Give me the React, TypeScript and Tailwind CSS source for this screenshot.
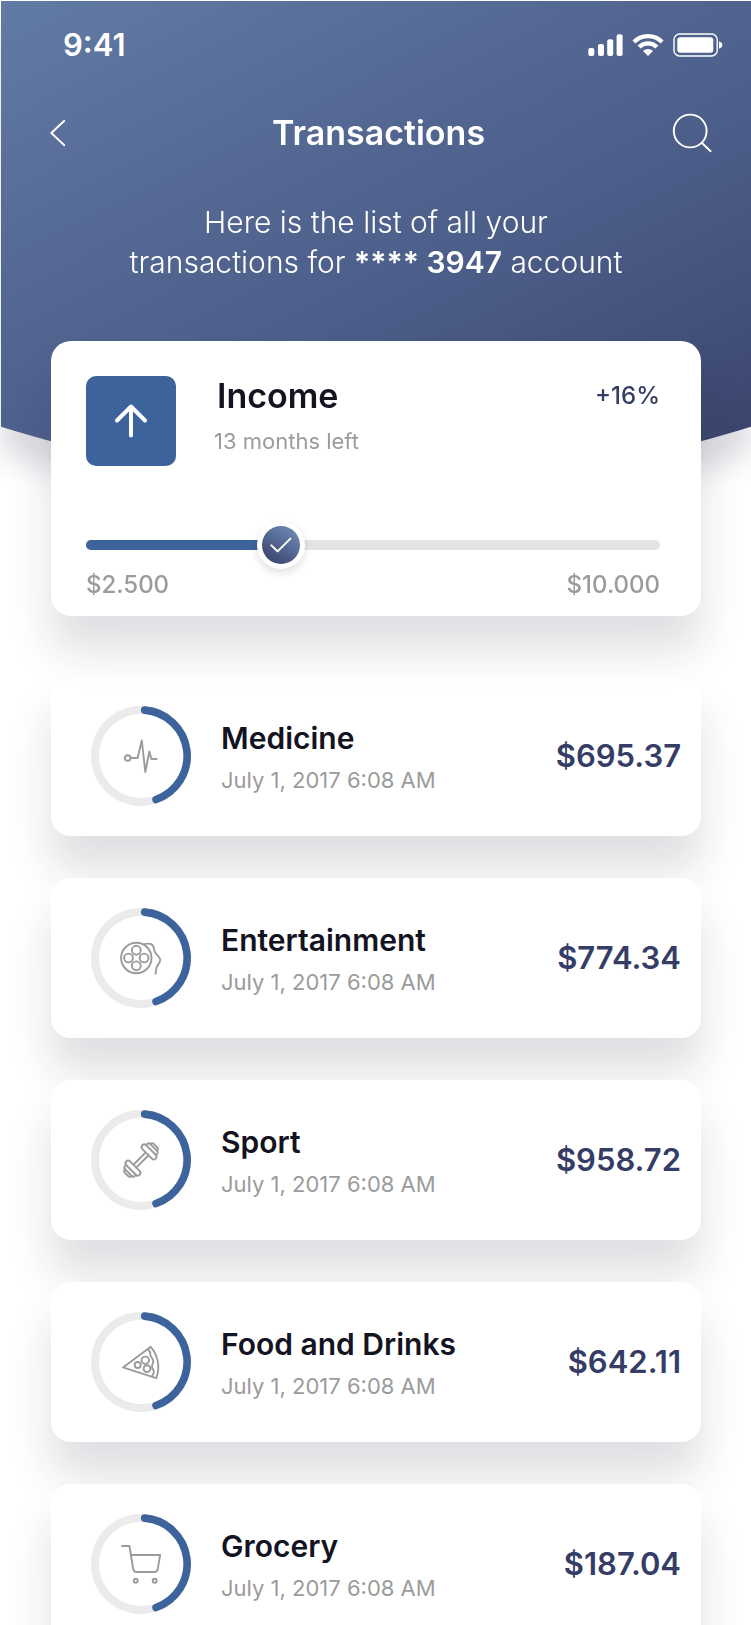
import { useState } from "react";
import type { ReactNode } from "react";

type Transaction = {
  title: string;
  date: string;
  amount: string;
  icon: ReactNode;
};

const transactions: Transaction[] = [
  {
    title: "Medicine",
    date: "July 1, 2017 6:08 AM",
    amount: "$695.37",
    icon: (
      <>
        <circle cx="36.7" cy="52" r="2.8" />
        <path d="M39.7 52H46.6L50.8 34.5L54.3 66L58.3 45.5L60.4 53H65.6" />
      </>
    ),
  },
  {
    title: "Entertainment",
    date: "July 1, 2017 6:08 AM",
    amount: "$774.34",
    icon: (
      <>
        <circle cx="45.3" cy="50" r="15.2" />
        <circle cx="45.3" cy="42.2" r="4.4" />
        <circle cx="37.5" cy="50" r="4.4" />
        <circle cx="53.1" cy="50" r="4.4" />
        <circle cx="45.3" cy="57.8" r="4.4" />
        <path d="M52 36.4C55 35.6 58 35.4 60.2 36.2C63 37.4 62.8 40.5 63.6 43.2C64.4 46.4 69 48.2 69.2 51.6C69.4 54.6 66.8 56.2 65.8 59C65 61.2 64.6 63.4 64.6 65.7" />
      </>
    ),
  },
  {
    title: "Sport",
    date: "July 1, 2017 6:08 AM",
    amount: "$958.72",
    icon: (
      <g transform="rotate(-45 50 50)">
        <path d="M41.3 48H58.7M41.3 52H58.7" />
        <rect x="58.7" y="40.6" width="5.4" height="18.8" rx="2.7" />
        <rect x="35.9" y="40.6" width="5.4" height="18.8" rx="2.7" />
        <path d="M64.1 43.2C67 42.6 67.8 43.6 67.8 45.2V54.8C67.8 56.4 67 57.4 64.1 56.8" />
        <path d="M35.9 43.2C33 42.6 32.2 43.6 32.2 45.2V54.8C32.2 56.4 33 57.4 35.9 56.8" />
        <path d="M67.8 45C69.8 45.4 70.4 46.2 70.4 47.4V52.6C70.4 53.8 69.8 54.6 67.8 55" />
        <path d="M32.2 45C30.2 45.4 29.6 46.2 29.6 47.4V52.6C29.6 53.8 30.2 54.6 32.2 55" />
      </g>
    ),
  },
  {
    title: "Food and Drinks",
    date: "July 1, 2017 6:08 AM",
    amount: "$642.11",
    icon: (
      <>
        <path d="M32 55.4L59.7 34.8C67 43 69.4 55.4 65.3 66.2Z" />
        <path d="M57 37.2C58.6 38.6 59.8 40 59.3 42.4C58.9 45 62.2 46 62.3 49C62.4 51.4 60.8 52.4 61 54.8C61.2 57 63 57.6 62.9 60C62.8 62 61.2 62.6 61.2 64.8" />
        <circle cx="54.3" cy="48.3" r="3.7" />
        <circle cx="46.7" cy="53" r="3" />
        <circle cx="56" cy="56.7" r="3.4" />
      </>
    ),
  },
  {
    title: "Grocery",
    date: "July 1, 2017 6:08 AM",
    amount: "$187.04",
    icon: (
      <>
        <path d="M31 32H38.4L42.2 54.8C42.6 57 43.4 58 45.4 58H63.4C65.4 58 66.4 57 66.8 54.8L69.1 41H40" />
        <circle cx="44.7" cy="66.7" r="2" />
        <circle cx="63.7" cy="66.7" r="2" />
      </>
    ),
  },
];

function StatusBar() {
  return (
    <div className="flex h-12 items-center justify-between pr-7 pl-[62px]">
      <span className="text-[31px] font-semibold">9:41</span>
      <svg viewBox="0 0 135 24" className="h-6 w-[135px]" fill="#fff" aria-hidden="true">
        <rect x="0.3" y="15" width="6" height="8" rx="2" />
        <rect x="10" y="11" width="6" height="12" rx="2" />
        <rect x="19.2" y="6.3" width="6" height="16.7" rx="2" />
        <rect x="28.6" y="1.3" width="6" height="21.7" rx="2" />
        <path d="M46 9A19.8 19.8 0 0 1 74 9" fill="none" stroke="#fff" strokeWidth="4.3" />
        <path d="M51.1 14.1A12.6 12.6 0 0 1 68.9 14.1" fill="none" stroke="#fff" strokeWidth="4.2" />
        <path d="M60 23L55 18A7 7 0 0 1 65 18Z" />
        <rect x="86" y="1" width="43.2" height="22" rx="5.6" fill="none" stroke="#fff" strokeWidth="1.4" />
        <rect x="89.3" y="4.3" width="36" height="15.4" rx="3" />
        <path d="M131 8.3C135.4 9.6 135.4 14.4 131 15.7Z" />
      </svg>
    </div>
  );
}

function Header() {
  return (
    <div className="drop-shadow-[0_28px_14px_rgba(30,28,60,0.15)]">
      <header className="h-[483px] bg-[linear-gradient(153deg,#617ba4_0%,#576b97_28%,#4c5e8a_56%,#425079_80%,#384069_100%)] pt-5 text-white [clip-path:ellipse(167%_1250px_at_50%_-767px)]">
        <StatusBar />
        <div className="mt-[38px] grid h-12 grid-cols-[1fr_auto_1fr] items-center pr-[39px] pl-11">
          <button type="button" aria-label="Back" className="justify-self-start pl-1">
            <svg viewBox="0 0 18 30" className="h-[30px] w-[18px]" fill="none" stroke="#fff" strokeWidth="1.9" strokeLinecap="round" strokeLinejoin="round">
              <path d="M15.3 2.8L2.3 15L15.3 27.2" />
            </svg>
          </button>
          <h1 className="text-[34px] font-semibold">Transactions</h1>
          <button type="button" aria-label="Search" className="justify-self-end">
            <svg viewBox="0 0 40 40" className="size-10" fill="none" stroke="#fff" strokeWidth="1.9" strokeLinecap="round">
              <circle cx="18.2" cy="18" r="16.4" />
              <path d="M30 30L38.6 38.2" />
            </svg>
          </button>
        </div>
        <p className="mt-[47px] text-center text-[30px] leading-10 font-light">
          Here is the list of all your
          <br />
          transactions for <strong className="font-semibold">**** 3947</strong> account
        </p>
      </header>
    </div>
  );
}

function IncomeCard() {
  const [value, setValue] = useState(34);
  return (
    <section className="relative z-10 -mt-[143px] rounded-[20px] bg-white pt-[35px] pr-[41px] pb-[15px] pl-[35px] shadow-[0_34px_44px_rgba(30,28,60,0.14)]">
      <div className="flex">
        <div className="flex size-[90px] items-center justify-center rounded-[10px] bg-[#3c639c]">
          <svg viewBox="0 0 36 36" className="size-9" fill="none" stroke="#fff" strokeWidth="4" strokeLinecap="round" strokeLinejoin="round" aria-hidden="true">
            <path d="M18 3.5V32.5M4 17.5L18 3.5L32 17.5" />
          </svg>
        </div>
        <div className="ml-[38px] flex-1">
          <h2 className="pl-[3px] text-[34px] leading-10 font-semibold text-[#141322]">Income</h2>
          <p className="mt-[7px] text-[22px] leading-9 text-[#9b9b9b]">13 months left</p>
        </div>
        <span className="text-2xl leading-10 font-medium text-[#353d66]">+16%</span>
      </div>
      <div className="relative mt-[55px] flex h-12 items-center">
        <div className="h-2.5 w-full overflow-hidden rounded-full bg-[#e4e4e4]">
          <div className="h-full bg-[#3c639c]" style={{ width: `${value}%` }} />
        </div>
        <div
          className="absolute flex size-12 -translate-x-1/2 items-center justify-center rounded-full bg-white shadow-[0_4px_8px_rgba(0,0,0,0.12)]"
          style={{ left: `${value}%` }}
        >
          <span className="flex size-[38px] items-center justify-center rounded-full bg-[linear-gradient(215deg,#7590b8_0%,#5a6f9a_40%,#353b66_100%)]">
            <svg viewBox="0 0 22 16" className="h-4 w-[22px]" fill="none" stroke="#fff" strokeWidth="2" strokeLinecap="round" strokeLinejoin="round" aria-hidden="true">
              <path d="M1.4 8.4L7.6 14.4L20.4 1.6" />
            </svg>
          </span>
        </div>
        <input
          type="range"
          min={0}
          max={100}
          value={value}
          onChange={(e) => setValue(Number(e.target.value))}
          aria-label="Income progress"
          className="absolute inset-0 h-full w-full cursor-pointer opacity-0"
        />
      </div>
      <div className="flex justify-between text-2xl font-medium text-[#9b9b9b]">
        <span>$2.500</span>
        <span>$10.000</span>
      </div>
    </section>
  );
}

function TransactionCard({ title, date, amount, icon }: Transaction) {
  return (
    <li className="flex h-40 items-center rounded-[20px] bg-white pr-5 pl-10 shadow-[0_34px_44px_rgba(30,28,60,0.14)]">
      <svg viewBox="0 0 100 100" className="size-[100px] shrink-0" fill="none" aria-hidden="true">
        <circle cx="50" cy="50" r="46" stroke="#ebebeb" strokeWidth="8" />
        <path d="M53.7 4.1A46 46 0 0 1 65 93.5" stroke="#3c639c" strokeWidth="7.6" strokeLinecap="round" />
        <g stroke="#9b9b9b" strokeWidth="1.9" strokeLinecap="round" strokeLinejoin="round">
          {icon}
        </g>
      </svg>
      <div className="ml-[30px] flex-1 pt-0.5">
        <h3 className="text-[30px] leading-10 font-semibold text-[#141322]">{title}</h3>
        <p className="mt-1.5 text-[22px] leading-8 text-[#9b9b9b]">{date}</p>
      </div>
      <span className="text-[31px] font-semibold text-[#353d66]">{amount}</span>
    </li>
  );
}

export default function App() {
  return (
    <div className="min-h-screen overflow-hidden bg-white pt-px pl-px font-[Inter,'Liberation_Sans',sans-serif]">
      <Header />
      <main className="px-[50px]">
        <IncomeCard />
        <ul className="mt-15 flex flex-col gap-[42px]">
          {transactions.map((item) => (
            <TransactionCard key={item.title} {...item} />
          ))}
        </ul>
      </main>
    </div>
  );
}
